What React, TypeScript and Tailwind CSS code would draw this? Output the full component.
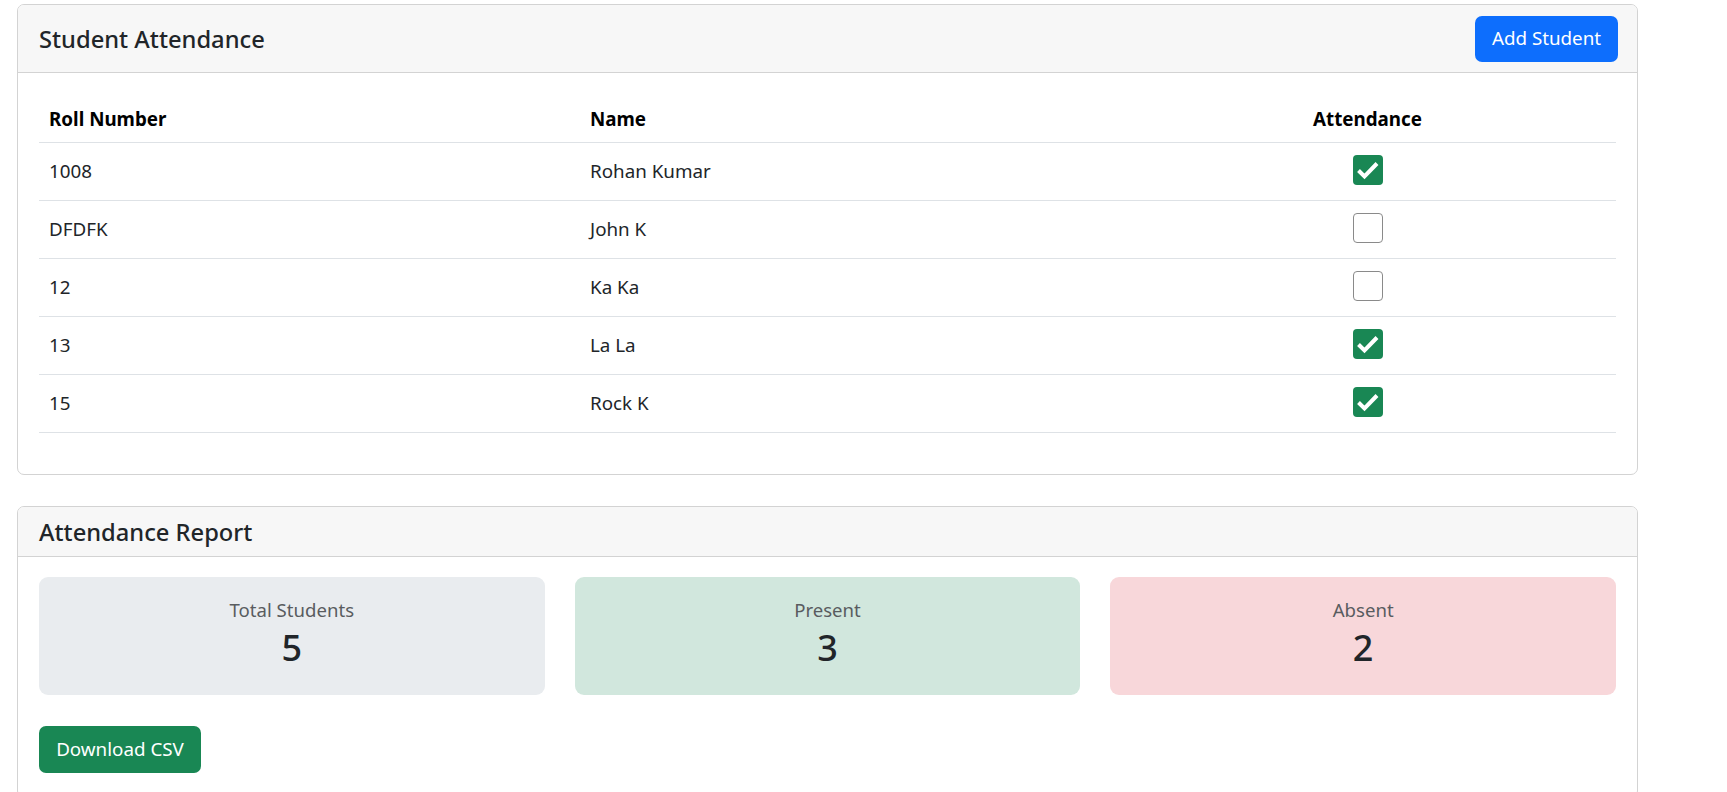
const students = [
  { roll: '1008', name: 'Rohan Kumar', present: true },
  { roll: 'DFDFK', name: 'John K', present: false },
  { roll: '12', name: 'Ka Ka', present: false },
  { roll: '13', name: 'La La', present: true },
  { roll: '15', name: 'Rock K', present: true },
]

function CheckBox({ checked }: { checked: boolean }) {
  if (checked) {
    return (
      <span className="mt-[-3px] w-[30px] h-[30px] rounded-[4px] bg-[#198754] block">
        <svg viewBox="0 0 30 30" className="w-[30px] h-[30px]" fill="none" stroke="#fff" strokeWidth={4} strokeLinecap="butt" strokeLinejoin="miter">
          <path d="M5.5 15.5l6 6l12.5-13" />
        </svg>
      </span>
    )
  }
  return <span className="mt-[-3px] w-[30px] h-[30px] rounded-[4px] border border-[#8a8a8a] bg-white block" />
}

function Stat({ label, value, bg }: { label: string; value: number; bg: string }) {
  return (
    <div className={`h-[118px] rounded-[9px] flex flex-col items-center pt-[20px] ${bg}`}>
      <p className="text-[18.6px] leading-[26px] text-[#595c5f]">{label}</p>
      <p className="mt-[4px] text-[36px] leading-[42px] font-medium text-[#212529]">{value}</p>
    </div>
  )
}

export default function App() {
  const present = students.filter(s => s.present).length

  return (
    <div className="min-h-screen bg-white pt-[4px] pl-[17px] text-[#212529] text-[18.8px]" style={{ fontFamily: '"Noto Sans", "Open Sans", sans-serif' }}>
      <div className="w-[1621px] flex flex-col gap-[31px]">
        <div className="border border-[#d3d3d3] rounded-[7px] overflow-hidden">
          <div className="h-[68px] bg-[#f7f7f7] border-b border-[#d3d3d3] flex items-center justify-between pl-[21px] pr-[19px]">
            <h5 className="pt-[2px] text-[23.7px] font-medium">Student Attendance</h5>
            <button className="h-[46px] w-[143px] rounded-[7px] bg-[#0d6efd] text-white text-[18.8px]">Add Student</button>
          </div>
          <div className="px-[21px] pt-[18px] pb-[41px]">
            <div className="grid grid-cols-[542px_538px_1fr] h-[52px] pt-[6px] items-center border-b border-[#dee2e6] font-bold text-black">
              <div className="pl-[10px]">Roll Number</div>
              <div className="pl-[9px]">Name</div>
              <div className="text-center">Attendance</div>
            </div>
            {students.map(s => (
              <div key={s.roll} className="grid grid-cols-[542px_538px_1fr] h-[58px] items-center border-b border-[#dee2e6]">
                <div className="pl-[10px]">{s.roll}</div>
                <div className="pl-[9px]">{s.name}</div>
                <div className="flex justify-center">
                  <CheckBox checked={s.present} />
                </div>
              </div>
            ))}
          </div>
        </div>

        <div className="border border-[#d3d3d3] rounded-[7px] overflow-hidden">
          <div className="h-[50px] bg-[#f7f7f7] border-b border-[#d3d3d3] flex items-center pl-[21px]">
            <h5 className="pt-[2px] text-[23.7px] font-medium">Attendance Report</h5>
          </div>
          <div className="px-[21px] pt-[20px] pb-[24px]">
            <div className="grid grid-cols-3 gap-[30px]">
              <Stat label="Total Students" value={students.length} bg="bg-[#e9ecef]" />
              <Stat label="Present" value={present} bg="bg-[#d1e7dd]" />
              <Stat label="Absent" value={students.length - present} bg="bg-[#f8d7da]" />
            </div>
            <button className="mt-[31px] h-[47px] w-[162px] rounded-[7px] bg-[#198754] text-white text-[18.8px]">Download CSV</button>
          </div>
        </div>
      </div>
    </div>
  )
}
